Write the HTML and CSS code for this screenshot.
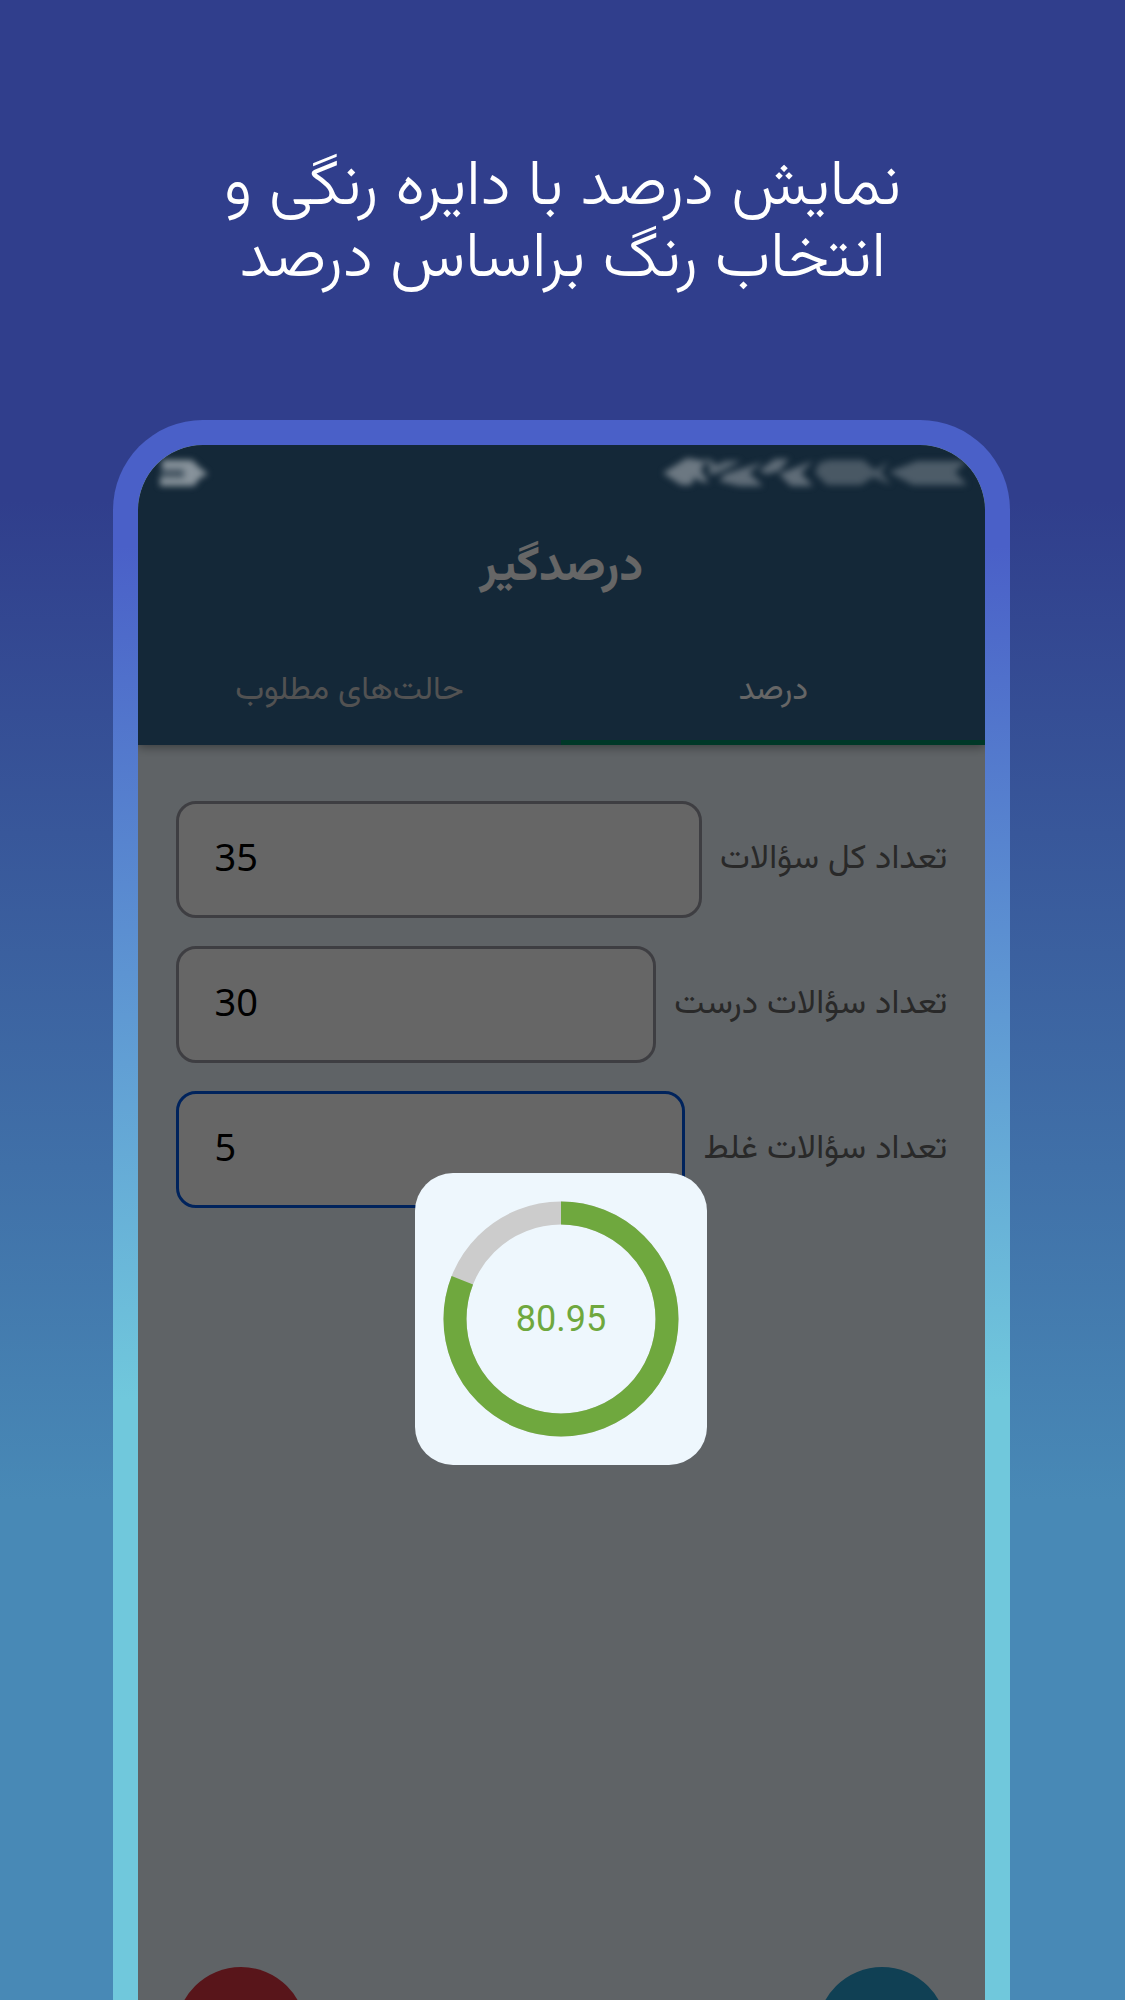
FILE: index.html
```html
<!DOCTYPE html>
<html lang="fa" dir="rtl">

<head>
    <meta charset="UTF-8">
    <meta name="viewport" content="width=device-width, initial-scale=1">
    <title>درصدگیر</title>
    <link rel="stylesheet" href="styles.css">
</head>

<body>
    <h1 class="headline">نمایش درصد با دایره رنگی و<br>انتخاب رنگ براساس درصد</h1>

    <main class="phone">
        <div class="screen">
            <header class="app-header">
                <div class="status-bar" aria-hidden="true">
                    <svg class="smudge" width="304" height="48" viewBox="0 0 304 48">
                        <path d="M-4 28 L20 13 L38 16 L34 26 L42 38 L32 36 L28 32 L24 40 L14 40 Z" />
                        <path d="M36 15 L42 20 L42 30 L52 28 L74 16 L58 16 L50 20 L42 14 Z" opacity=".8" />
                        <path d="M58 29 L96 17 L82 28 L96 41 L72 41 L52 36 Z" opacity=".85" />
                        <path d="M92 26 L108 14 L122 14 L112 26 L100 29 Z" opacity=".85" />
                        <path d="M112 29 L146 16 L134 28 L146 41 L124 41 Z" opacity=".85" />
                        <path d="M152 18 L162 15 H196 L208 25 L222 16 L214 27 L224 40 L206 32 L194 40 H160 L148 28 Z" opacity=".6" />
                        <path d="M222 27 L250 16 H300 L288 27 L300 40 H246 Z" opacity=".65" />
                    </svg>
                    <svg class="smudge bright" width="64" height="48" viewBox="0 0 64 48">
                        <path d="M6 15 H36 L44 23 L52 29 L44 33 L38 41 H4 V33 H28 V24 H6 Z" />
                        <path d="M6 22 H40 V34 H4 Z" opacity=".45" />
                    </svg>
                </div>
                <h2 class="app-title">درصدگیر</h2>
                <nav class="tabs">
                    <button class="tab active" type="button">درصد</button>
                    <button class="tab" type="button">حالت‌های مطلوب</button>
                </nav>
            </header>

            <form class="fields">
                <div class="field">
                    <label for="total">تعداد کل سؤالات</label>
                    <input id="total" type="text" inputmode="numeric" value="35">
                </div>
                <div class="field">
                    <label for="correct">تعداد سؤالات درست</label>
                    <input id="correct" type="text" inputmode="numeric" value="30">
                </div>
                <div class="field">
                    <label for="wrong">تعداد سؤالات غلط</label>
                    <input id="wrong" class="current" type="text" inputmode="numeric" value="5">
                </div>
            </form>

            <div class="actions">
                <button class="fab blue" type="button" aria-label="محاسبه"></button>
                <button class="fab red" type="button" aria-label="پاک کردن"></button>
            </div>

            <div class="backdrop">
                <div class="dialog" role="dialog" aria-label="درصد">
                    <svg class="ring" viewBox="0 0 236 236">
                        <circle class="ring-track" cx="118" cy="118" r="106" />
                        <circle class="ring-value" cx="118" cy="118" r="106" pathLength="100"
                            stroke-dasharray="80.95 100" transform="rotate(-90 118 118)" />
                        <text x="118" y="130" text-anchor="middle">80.95</text>
                    </svg>
                </div>
            </div>
        </div>
    </main>
</body>

</html>
```
FILE: styles.css
```css
* {
    box-sizing: border-box;
}

body {
    margin: 0;
    height: 100vh;
    overflow: hidden;
    display: flex;
    flex-direction: column;
    background: linear-gradient(#303e8c 25%, #4889b6 75%);
    font-family: "Vazirmatn", "Vazir", "DejaVu Sans", sans-serif;
}

.headline {
    margin: 0;
    padding: 152px 24px 124px;
    color: #ffffff;
    font-size: 64px;
    font-weight: 300;
    line-height: 72px;
    text-align: center;
}

/* Phone frame, runs off the bottom of the page */
.phone {
    flex: 1;
    min-height: 0;
    margin: 0 10.2% 0 10%;
    padding: 25px 25px 0;
    border-radius: 90px 90px 0 0;
    background: linear-gradient(#4a60c8 8%, #70c8dc 62%);
}

.screen {
    position: relative;
    display: flex;
    flex-direction: column;
    height: 100%;
    overflow: hidden;
    border-radius: 65px 65px 0 0;
    background-color: #eef8ff;
}

/* Header */
.app-header {
    background-color: #32648c;
    color: #ffffff;
    box-shadow: 0 2px 10px rgba(0, 0, 0, 0.4);
}

/* Stays above the backdrop */
.status-bar {
    position: relative;
    z-index: 1;
    display: flex;
    justify-content: space-between;
    height: 48px;
    padding: 0 14px 0 18px;
}

.smudge {
    overflow: visible;
    fill: #6c7882;
    filter: blur(3px);
}

.smudge.bright {
    fill: #88939b;
}

.app-title {
    margin: 0;
    padding: 40px 0 36px;
    font-size: 48px;
    font-weight: bold;
    line-height: 72px;
    text-align: center;
}

.tabs {
    display: flex;
}

.tab {
    flex: 1;
    height: 104px;
    padding: 0;
    border: none;
    border-bottom: 5px solid transparent;
    background: none;
    color: #cccccc;
    font-family: inherit;
    font-size: 33px;
    cursor: pointer;
}

.tab.active {
    border-bottom-color: #008c64;
    color: #ffffff;
}

/* Form */
.fields {
    display: flex;
    flex-direction: column;
    gap: 28px;
    padding: 56px 38px;
}

.field {
    display: flex;
    align-items: center;
    gap: 18px;
}

.field label {
    color: #666666;
    font-size: 34px;
    white-space: nowrap;
}

.field input {
    flex: 1;
    min-width: 0;
    height: 117px;
    padding: 0 36px 8px;
    border: 3px solid #9c9ca6;
    border-radius: 20px;
    background-color: #ffffff;
    color: #000000;
    font-family: "Noto Sans", sans-serif;
    font-size: 38px;
    direction: ltr;
}

.field input.current {
    border-color: #0058e6;
}

/* Round buttons, only the top edge shows */
.actions {
    display: flex;
    justify-content: space-between;
    margin-top: auto;
    margin-bottom: -97px;
    padding: 0 38px;
}

.fab {
    width: 130px;
    height: 130px;
    border: none;
    border-radius: 50%;
    cursor: pointer;
}

.fab.red {
    background-color: #dc3543;
}

.fab.blue {
    background-color: #28a0d2;
}

/* Result dialog */
.backdrop {
    position: absolute;
    inset: 0;
    display: flex;
    align-items: flex-start;
    justify-content: center;
    padding-top: 728px;
    background-color: rgba(0, 0, 0, 0.6);
}

.dialog {
    padding: 28px;
    border-radius: 38px;
    background-color: #eef7fd;
}

.ring {
    display: block;
    width: 236px;
    height: 236px;
}

.ring circle {
    fill: none;
    stroke-width: 23px;
}

.ring-track {
    stroke: #cccccc;
}

.ring-value {
    stroke: #6fa83e;
}

.ring text {
    fill: #6fa83e;
    font-family: Roboto, sans-serif;
    font-size: 36px;
    direction: ltr;
}
```
